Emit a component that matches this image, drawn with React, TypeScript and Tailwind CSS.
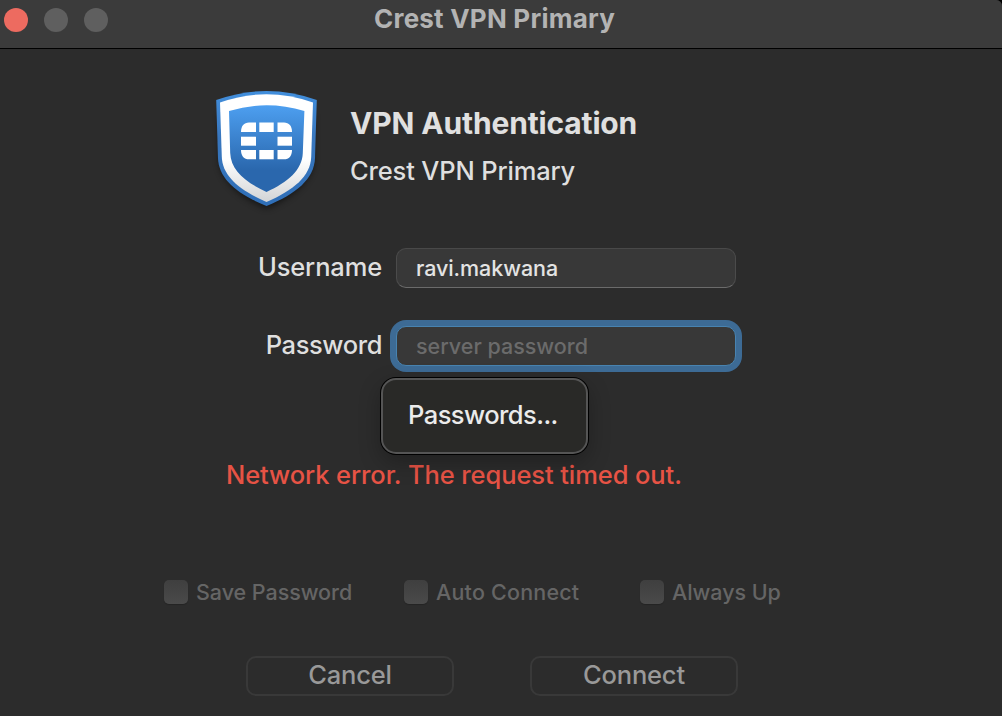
import type { ReactNode } from "react";

function Shield() {
  return (
    <svg width="130" height="140" viewBox="0 0 130 140" className="block shrink-0" aria-hidden="true">
      <defs>
        <linearGradient id="rim" x1="0" y1="0" x2="0" y2="1">
          <stop offset="0" stopColor="#428fdd" />
          <stop offset="0.4" stopColor="#3977be" />
          <stop offset="1" stopColor="#2f6fb8" />
        </linearGradient>
        <linearGradient id="band" x1="0" y1="0" x2="0" y2="1">
          <stop offset="0" stopColor="#ffffff" />
          <stop offset="0.6" stopColor="#ffffff" />
          <stop offset="1" stopColor="#d2d4d6" />
        </linearGradient>
        <linearGradient id="core" x1="0" y1="0" x2="0" y2="1">
          <stop offset="0" stopColor="#4d9ff0" />
          <stop offset="0.75" stopColor="#2a67ad" />
          <stop offset="1" stopColor="#2a67ad" />
        </linearGradient>
        <filter id="soft" x="-20%" y="-20%" width="140%" height="140%">
          <feGaussianBlur stdDeviation="3.5" />
        </filter>
      </defs>
      <path d="M20 34H113V84C109 104 88 119 66.5 128C45 119 24 104 20 84Z" fill="#000" opacity=".6" filter="url(#soft)" />
      <path d="M16.2 20Q66.5 2 116.8 20L115 78C114.3 99 96 114 66.5 126C37 114 18.7 99 18 78Z" fill="url(#rim)" />
      <path d="M20 22.5Q66.5 6 113 22.5L111.2 77C110.5 96 94 110 66.5 122C39 110 22.5 96 21.8 77Z" fill="url(#band)" />
      <path d="M29 31Q66.5 19.5 104.4 31L102.8 73C102.2 90 88 102 66.5 112C45 102 30.8 90 30.2 73Z" fill="url(#core)" />
      <g fill="#fff">
        <path d="M56 42.5V52H41C41 46 44 42.5 49 42.5Z" />
        <path d="M59.3 42.5H73.7V52H59.3Z" />
        <path d="M77.5 42.5H84C89 42.5 92 46 92 52H77.5Z" />
        <path d="M41 56.7H56V65.7H41Z" />
        <path d="M77.5 56.7H92V65.7H77.5Z" />
        <path d="M41 70H56V79.3H49C44 79.3 41 76 41 70Z" />
        <path d="M59.3 70H73.7V79.3H59.3Z" />
        <path d="M77.5 70H92C92 76 89 79.3 84 79.3H77.5Z" />
      </g>
    </svg>
  );
}

function Check({ className, children }: { className: string; children: ReactNode }) {
  return (
    <label className={`flex items-center gap-2 text-[21.5px] leading-6 text-[#656565] ${className}`}>
      <span className="size-6 shrink-0 rounded-[5px] bg-linear-to-b from-[#3f3f3f] to-[#4a4a4a] shadow-[0_1px_1px_rgba(0,0,0,0.2)]" />
      <span className="whitespace-nowrap">{children}</span>
    </label>
  );
}

function PushButton({ children }: { children: ReactNode }) {
  return (
    <button className="flex h-10 w-[208px] items-center justify-center rounded-[10px] border-2 border-[#393939] pb-0.5 text-[25.5px] leading-8 tracking-[-0.2px] text-[#999999]">
      {children}
    </button>
  );
}

export default function App() {
  return (
    <div className="h-[716px] w-[1002px] overflow-hidden bg-black font-['Inter',sans-serif] font-[450]">
      <div className="flex h-full flex-col overflow-hidden rounded-tr-[6px] bg-[#2c2c2c]">
        <header className="flex h-[49px] shrink-0 border-b border-black bg-[#3b3b3b] pt-2 pl-1">
          <div className="flex w-[370px] gap-4">
            <span className="size-6 rounded-full bg-[#ed6b60]" />
            <span className="size-6 rounded-full bg-[#5f5f5f]" />
            <span className="size-6 rounded-full bg-[#5f5f5f]" />
          </div>
          <h1 className="-mt-[5px] text-[26px] leading-8 font-bold tracking-[0.22px] whitespace-nowrap text-[#b3b3b3]">
            Crest VPN Primary
          </h1>
        </header>

        <main className="flex flex-1 flex-col">
          <section className="flex h-[199px] pt-[31px] pl-[200px]">
            <Shield />
            <div className="pt-6 pl-5 whitespace-nowrap">
              <h2 className="text-[30px] leading-[38px] font-bold tracking-[-0.15px] text-[#e0e0e0]">VPN Authentication</h2>
              <p className="mt-[13px] text-[25.5px] leading-8 tracking-[-0.16px] text-[#dfdfdf]">Crest VPN Primary</p>
            </div>
          </section>

          <section className="flex flex-col gap-[38px]">
            <div className="flex h-10 items-center">
              <label className="w-[382px] pb-0.5 text-right text-[25.5px] tracking-[-0.15px] text-[#dfdfdf]">Username</label>
              <div className="ml-3.5 flex h-10 w-[340px] items-center rounded-[10px] border border-t-[#494949] border-r-[#4b4b4b] border-b-[#6b6b6b] border-l-[#4b4b4b] bg-[#383838] pl-[19px] text-[21.5px] tracking-[-0.07px] text-[#e3e3e3]">
                ravi.makwana
              </div>
            </div>
            <div className="flex h-10 items-center">
              <label className="w-[382px] pb-0.5 text-right text-[25.5px] tracking-[-0.4px] text-[#dfdfdf]">Password</label>
              <div className="relative ml-3.5 h-10 w-[340px]">
                <div className="flex h-10 w-[340px] items-center rounded-[10px] border border-[#4883b0] bg-[#383838] pl-[19px] text-[21.5px] text-[#6b6b6b] shadow-[0_0_0_6px_#3d6b95]">
                  server password
                </div>
                <div className="absolute top-[52px] -left-[15px] flex h-[76px] w-[207px] items-center rounded-[15px] border-2 border-[#555555] bg-[#292927] pb-0.5 pl-[25px] text-[25.5px] tracking-[-0.55px] whitespace-nowrap text-[#ebebeb] shadow-[0_0_0_1px_#000,0_8px_22px_rgba(0,0,0,0.28)]">
                  Passwords...
                </div>
              </div>
            </div>
          </section>

          <p className="mt-[93px] pl-[226px] text-[25.5px] leading-8 tracking-[-0.09px] whitespace-nowrap text-[#e75345]">
            Network error. The request timed out.
          </p>

          <section className="mt-[89px] flex pl-[164px]">
            <Check className="w-[240px] tracking-[-0.05px]">Save Password</Check>
            <Check className="w-[236px] tracking-[0.2px]">Auto Connect</Check>
            <Check className="w-[200px] tracking-[-0.05px]">Always Up</Check>
          </section>

          <footer className="mt-[52px] flex gap-[76px] pl-[246px]">
            <PushButton>Cancel</PushButton>
            <PushButton>Connect</PushButton>
          </footer>
        </main>
      </div>
    </div>
  );
}
